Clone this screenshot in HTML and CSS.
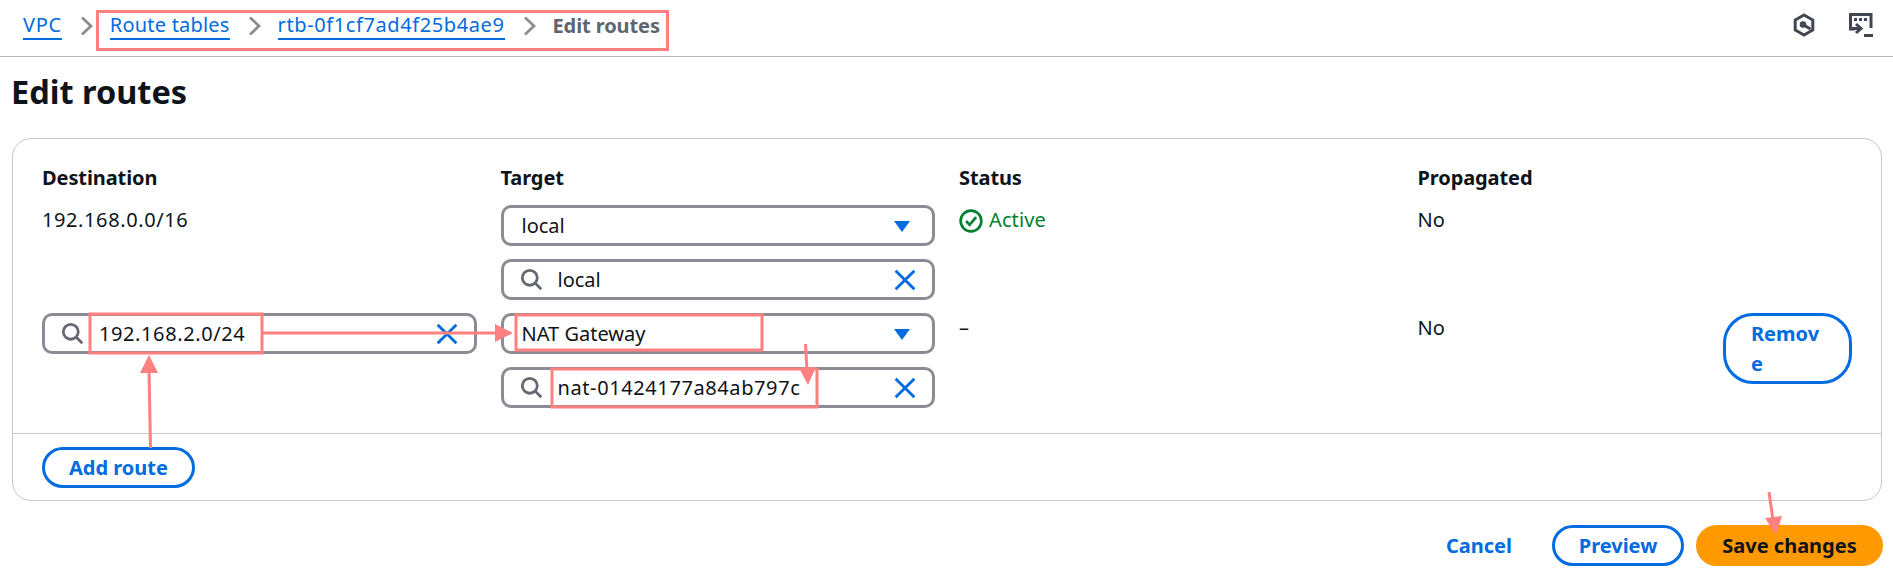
FILE: index.html
```html
<!DOCTYPE html>
<html lang="en">
<head>
<meta charset="utf-8">
<title>Edit routes</title>
<link rel="stylesheet" href="styles.css">
</head>
<body>
<header class="topbar">
  <nav class="crumbs">
    <a class="link first" href="#">VPC</a>
    <svg class="sep" viewBox="0 0 13 20"><path d="M2 1.500l9 8.500-9 8.500"/></svg>
    <a class="link" href="#">Route tables</a>
    <svg class="sep" viewBox="0 0 13 20"><path d="M2 1.500l9 8.500-9 8.500"/></svg>
    <a class="link digits" href="#">rtb-0f1cf7ad4f25b4ae9</a>
    <svg class="sep" viewBox="0 0 13 20"><path d="M2 1.500l9 8.500-9 8.500"/></svg>
    <span class="current">Edit routes</span>
  </nav>
  <div class="tools">
    <svg class="tool-hex" viewBox="0 0 22 24"><path class="tool-line" d="M11 2l8.800 5v10L11 22l-8.800-5V7z"/><circle class="tool-line" cx="10" cy="11.500" r="1.800"/><path class="tool-line" d="M11.500 12.500l6 3.500"/></svg>
    <svg class="tool-term" viewBox="0 0 24 24"><path class="tool-line" d="M6 16H1.500V1.500h20.500V15"/><path class="tool-line" d="M7 11l5 4.500-5 4.500"/><path class="tool-line" d="M3 15.500h8"/><path class="tool-line" d="M15 22.500h9"/><path class="tool-dots" d="M5 5h3v3H5zM10 5h3v3h-3zM15 5h3v3h-3z"/></svg>
  </div>
</header>

<h1 class="title">Edit routes</h1>

<section class="card">
  <div class="grid heads">
    <div>Destination</div>
    <div>Target</div>
    <div>Status</div>
    <div>Propagated</div>
  </div>

  <div class="grid row">
    <div class="cell-text digits">192.168.0.0/16</div>
    <div class="stack">
      <div class="field select"><span class="grow">local</span>
        <svg class="caret" viewBox="0 0 16 12"><path d="M0 1h16L8 12z"/></svg></div>
      <div class="field search">
        <svg class="mag" viewBox="0 0 20 20"><circle cx="8.500" cy="8.500" r="6.500"/><path d="M13.500 13.500l5 5"/></svg>
        <span class="grow">local</span>
        <svg class="clear" viewBox="0 0 20 20"><path d="M1.500 1.500l17 17M18.500 1.500l-17 17"/></svg></div>
    </div>
    <div class="cell-text status">
      <svg class="ok" viewBox="0 0 22 22"><circle cx="11" cy="11" r="9.500"/><path d="M6.500 11l3.200 3.500 6-7"/></svg>
      <span>Active</span>
    </div>
    <div class="cell-text">No</div>
  </div>

  <div class="grid row">
    <div>
      <div class="field search">
        <svg class="mag" viewBox="0 0 20 20"><circle cx="8.500" cy="8.500" r="6.500"/><path d="M13.500 13.500l5 5"/></svg>
        <span class="grow digits">192.168.2.0/24</span>
        <svg class="clear" viewBox="0 0 20 20"><path d="M1.500 1.500l17 17M18.500 1.500l-17 17"/></svg></div>
    </div>
    <div class="stack">
      <div class="field select"><span class="grow">NAT Gateway</span>
        <svg class="caret" viewBox="0 0 16 12"><path d="M0 1h16L8 12z"/></svg></div>
      <div class="field search">
        <svg class="mag" viewBox="0 0 20 20"><circle cx="8.500" cy="8.500" r="6.500"/><path d="M13.500 13.500l5 5"/></svg>
        <span class="grow digits">nat-01424177a84ab797c</span>
        <svg class="clear" viewBox="0 0 20 20"><path d="M1.500 1.500l17 17M18.500 1.500l-17 17"/></svg></div>
    </div>
    <div class="cell-text">–</div>
    <div class="last">
      <div class="cell-text">No</div>
      <button class="btn remove">Remove</button>
    </div>
  </div>

  <div class="card-foot">
    <button class="btn add">Add route</button>
  </div>
</section>

<footer class="actions">
  <a class="cancel" href="#">Cancel</a>
  <button class="btn preview">Preview</button>
  <button class="btn save">Save changes</button>
</footer>

<svg class="marks" viewBox="0 0 1893 578">
  <rect x="97.500" y="11.500" width="570" height="38"/>
  <rect x="90" y="314" width="172" height="39"/>
  <rect x="516" y="315" width="246" height="35"/>
  <rect x="552" y="369" width="265" height="38"/>
  <path d="M150.500 448L149 370M263 333H496M805.500 344L807 370M1769 492L1773 520"/>
  <polygon points="149,355 158,373 140,373"/>
  <polygon points="513,333 495,324 495,342"/>
  <polygon points="808,385 799,368 816,367"/>
  <polygon points="1776,535 1765,518 1782,516"/>
</svg>
</body>
</html>
```
FILE: styles.css
```css
* { box-sizing: border-box; }
html, body { margin: 0; padding: 0; }
body {
  width: 1893px;
  height: 578px;
  overflow: hidden;
  background: #fff;
  color: #0f141a;
  font-family: "Noto Sans", "Open Sans", sans-serif;
  font-size: 20px;
  line-height: 24px;
  position: relative;
}
.digits { letter-spacing: 0.6px; }
.topbar {
  height: 57px;
  border-bottom: 1px solid #b4b4bb;
  display: flex;
  align-items: center;
  justify-content: space-between;
  padding: 0 20px 5px 23px;
}
.crumbs { display: flex; align-items: center; }
.link {
  color: #006ce0;
  text-decoration: none;
  border-bottom: 2px solid #006ce0;
  line-height: 26px;
  letter-spacing: 0.2px;
}
.link.first { letter-spacing: 0.7px; }
.link.digits { letter-spacing: 0.6px; }
.sep { width: 13px; height: 20px; margin: 0 17px 0 18px; }
.sep path { fill: none; stroke: #8c8c94; stroke-width: 2.800; }
.current { color: #5f6570; font-weight: 700; letter-spacing: -0.1px; }
.tools { display: flex; align-items: center; gap: 34px; padding-bottom: 1px; }
.tool-hex { width: 22px; height: 24px; }
.tool-term { width: 24px; height: 24px; }
.tool-line { fill: none; stroke: #414750; stroke-width: 3; }
.tool-dots { fill: #414750; }

.title {
  margin: 14px 0 0 11px;
  font-size: 32.500px;
  line-height: 42px;
  font-weight: 700;
}
.card {
  margin: 25px 11px 0 12px;
  height: 363px;
  border: 1px solid #c6c6cd;
  border-radius: 19px;
  display: flex;
  flex-direction: column;
}
.grid {
  display: grid;
  grid-template-columns: repeat(4, 1fr);
  column-gap: 24px;
  padding: 0 29px;
}
.heads { padding-top: 27px; font-weight: 700; height: 66px; letter-spacing: -0.1px; }
.row { padding-bottom: 13px; }
.row + .row { padding-bottom: 25px; border-bottom: 1px solid #c6c6cd; }
.stack { display: flex; flex-direction: column; gap: 13px; }
.cell-text { padding-top: 3px; }
.status { display: flex; align-items: flex-start; gap: 6px; color: #00802f; letter-spacing: 0.1px; }
.ok { width: 24px; height: 24px; margin-top: 1px; }
.ok circle, .ok path { fill: none; stroke: #00802f; stroke-width: 2.400; }
.last { display: flex; justify-content: space-between; align-items: flex-start; }
.field {
  height: 41px;
  border: 3px solid #8c8c94;
  border-radius: 10px;
  display: flex;
  align-items: center;
  background: #fff;
}
.select { padding: 0 22px 0 18px; }
.search { padding: 0 16px 0 16px; }
.grow { flex: 1; white-space: nowrap; }
.caret { width: 16px; height: 12px; }
.caret path { fill: #006ce0; }
.mag { width: 23px; height: 23px; margin-right: 15px; }
.mag circle, .mag path { fill: none; stroke: #656871; stroke-width: 2.400; }
.clear { width: 22px; height: 22px; }
.clear path { fill: none; stroke: #006ce0; stroke-width: 2.600; }

.btn {
  font-family: inherit;
  font-size: 20px;
  line-height: 24px;
  font-weight: 700;
  border: 3px solid #006ce0;
  border-radius: 24px;
  background: #fff;
  color: #006ce0;
  padding: 6px 24px;
  height: 41px;
}
.remove {
  width: 129px;
  height: 71px;
  line-height: 30px;
  padding: 3px 25px;
  text-align: left;
  word-break: break-all;
  border-radius: 30px;
}
.card-foot { padding: 13px 29px 0; }
.add { width: 153px; padding: 0; height: 41px; }
.actions {
  margin-top: 24px;
  padding-right: 10px;
  display: flex;
  justify-content: flex-end;
  align-items: center;
}
.cancel { color: #006ce0; font-weight: 700; text-decoration: none; margin-right: 40px; }
.preview { width: 132px; padding: 0; margin-right: 12px; }
.save {
  width: 187px;
  padding: 0;
  background: #ff9900;
  border-color: #ff9900;
  color: #0f141a;
}
.marks { position: absolute; left: 0; top: 0; width: 1893px; height: 578px; pointer-events: none; }
.marks rect { fill: none; stroke: #ff8080; stroke-width: 3; }
.marks path { fill: none; stroke: #ff8080; stroke-width: 3; }
.marks polygon { fill: #ff8080; }
```
